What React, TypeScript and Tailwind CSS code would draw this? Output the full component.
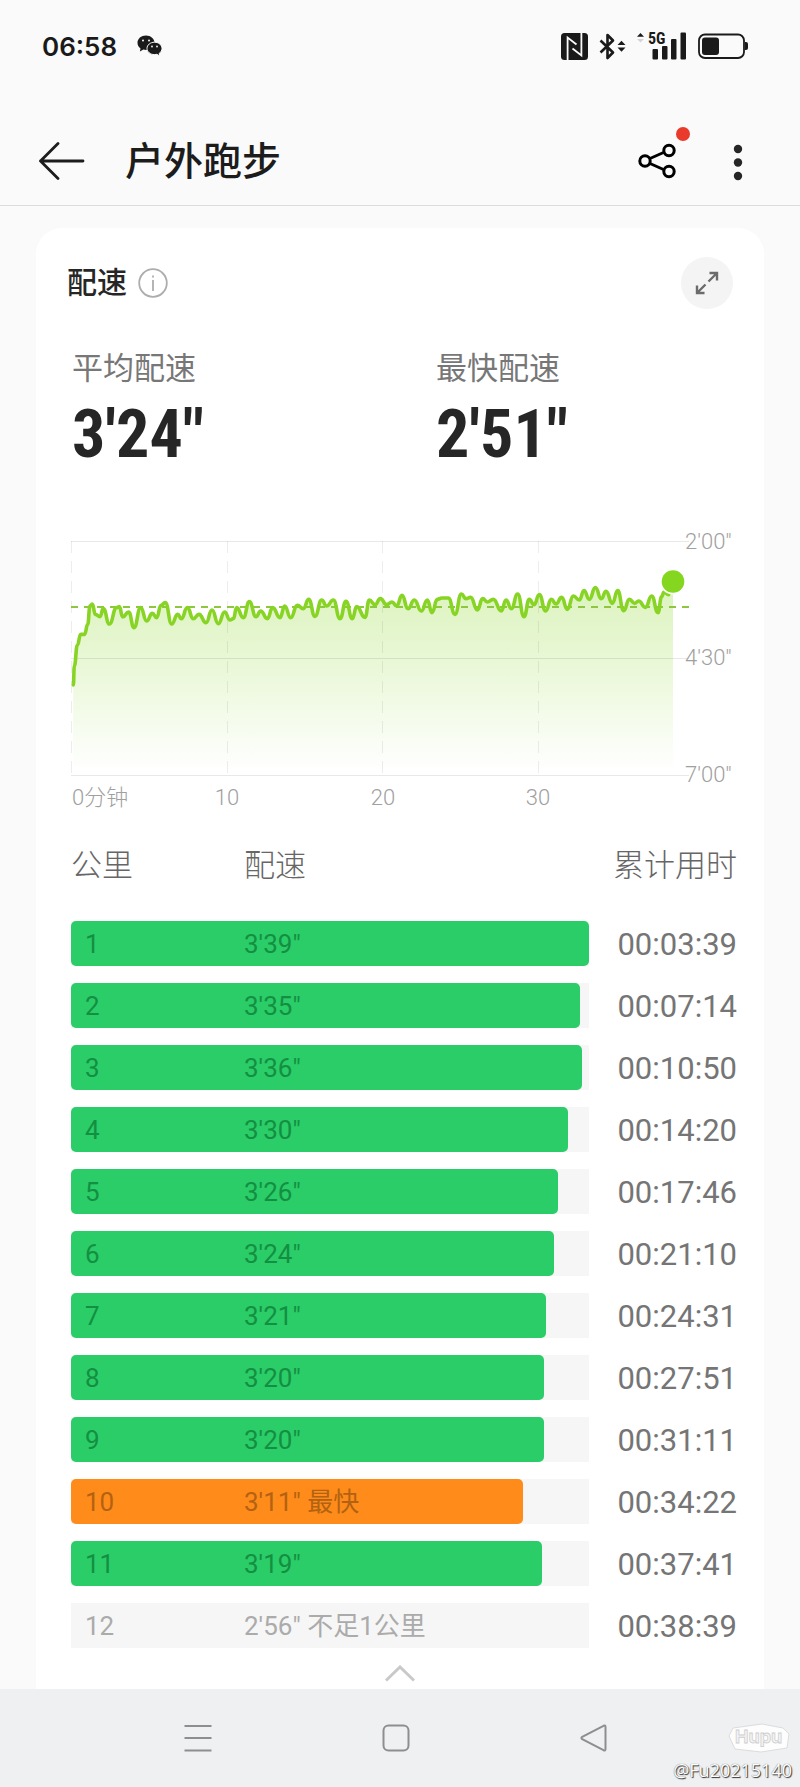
import { useState } from "react";

type Split = { km: number; pace: number; total: string; note?: string; partial?: boolean };

const splits: Split[] = [
  { km: 1, pace: 219, total: "00:03:39" },
  { km: 2, pace: 215, total: "00:07:14" },
  { km: 3, pace: 216, total: "00:10:50" },
  { km: 4, pace: 210, total: "00:14:20" },
  { km: 5, pace: 206, total: "00:17:46" },
  { km: 6, pace: 204, total: "00:21:10" },
  { km: 7, pace: 201, total: "00:24:31" },
  { km: 8, pace: 200, total: "00:27:51" },
  { km: 9, pace: 200, total: "00:31:11" },
  { km: 10, pace: 191, total: "00:34:22", note: "最快" },
  { km: 11, pace: 199, total: "00:37:41" },
  { km: 12, pace: 176, total: "00:38:39", note: "不足1公里", partial: true },
];

const slowest = Math.max(...splits.map((s) => s.pace));

const formatPace = (seconds: number) =>
  `${Math.floor(seconds / 60)}'${String(seconds % 60).padStart(2, "0")}"`;

// pace samples as [x, y], three units to one chart pixel, from the top left of the plot
const samples: [number, number][] = [
  [7, 432], [10, 375], [19, 313], [29, 280], [41, 280], [50, 250], [57, 195], [64, 189], [73, 220], [87, 227],
  [97, 203], [115, 249], [137, 200], [145, 197], [155, 228], [173, 213], [189, 260], [209, 200], [227, 240],
  [244, 217], [257, 230], [270, 193], [283, 185], [302, 249], [320, 220], [331, 233], [349, 200], [367, 233],
  [384, 220], [405, 245], [423, 207], [442, 248], [461, 213], [477, 237], [487, 233], [497, 200], [517, 230],
  [535, 182], [555, 227], [569, 210], [589, 233], [605, 200], [627, 230], [641, 195], [659, 230], [679, 193],
  [697, 203], [713, 175], [732, 226], [752, 177], [767, 195], [787, 177], [807, 233], [825, 181], [844, 233],
  [857, 197], [882, 229], [895, 177], [912, 191], [928, 173], [947, 191], [963, 183], [977, 195], [993, 163],
  [1011, 203], [1030, 177], [1051, 210], [1069, 177], [1083, 215], [1099, 175], [1113, 171], [1132, 171],
  [1152, 220], [1171, 159], [1185, 173], [1199, 169], [1219, 207], [1235, 173], [1249, 183], [1267, 175],
  [1291, 210], [1305, 177], [1321, 203], [1340, 159], [1359, 227], [1375, 175], [1389, 191], [1405, 161],
  [1424, 210], [1441, 175], [1455, 189], [1472, 169], [1489, 205], [1507, 165], [1525, 177], [1539, 149],
  [1555, 175], [1573, 140], [1591, 173], [1605, 151], [1624, 187], [1640, 149], [1658, 209], [1675, 175],
  [1691, 187], [1703, 180], [1723, 199], [1742, 165], [1761, 215], [1772, 167], [1779, 153], [1793, 161],
];

const plotTop = 20;
const points = samples.map(([x, y]) => [x / 3, plotTop + y / 3]);

const tracePath = points.reduce((d, [x, y], i) => {
  if (i === 0) return `M${x} ${y}`;
  const [px, py] = points[i - 1];
  const mid = (px + x) / 2;
  return `${d} C${mid} ${py} ${mid} ${y} ${x} ${y}`;
}, "");

function WeChatIcon() {
  return (
    <svg width="26" height="22" viewBox="0 0 26 22" fill="#1a1a1a" aria-label="微信">
      <path d="M9 0.5C4.2 0.5 0.5 3.7 0.5 7.8c0 2.3 1.1 4.2 3 5.6l-.6 3 3.5-1.8c.9.2 1.7.3 2.6.3 4.8 0 8.5-3.2 8.5-7.1S13.8.5 9 .5Z" />
      <path
        d="M17.5 7.2c-4.2 0-7.5 2.8-7.5 6.2s3.3 6.2 7.5 6.2c.8 0 1.6-.1 2.3-.3l3 1.7-.6-2.6c1.7-1.2 2.8-3 2.8-5 0-3.4-3.3-6.2-7.5-6.2Z"
        stroke="#fafafa"
      />
      <g fill="#fafafa">
        <circle cx="6" cy="5.5" r="1" />
        <circle cx="12" cy="5.5" r="1" />
        <circle cx="15" cy="11.5" r="0.9" />
        <circle cx="20" cy="11.5" r="0.9" />
      </g>
    </svg>
  );
}

function NfcIcon() {
  return (
    <svg width="27" height="27" viewBox="0 0 27 27" fill="none" aria-label="NFC">
      <rect width="27" height="27" rx="3.5" fill="#1a1a1a" />
      <path d="M6.6 27V4.5L15.5 11.5M20.4 0V22.5L11.5 15.5" stroke="#fafafa" strokeWidth="1.8" />
    </svg>
  );
}

function BluetoothIcon() {
  return (
    <svg width="27" height="27" viewBox="0 0 27 27" fill="none" aria-label="蓝牙">
      <path d="M1.5 7.5 14 19.5 8.5 25V2L14 7.5 1.5 19.5" stroke="#1a1a1a" strokeWidth="2.6" strokeLinejoin="round" />
      <path d="M18.5 12 22.5 7.8 26.5 12ZM18.5 14.5 22.5 18.7 26.5 14.5Z" fill="#1a1a1a" />
    </svg>
  );
}

function SignalIcon() {
  return (
    <svg width="50" height="36" viewBox="0 -4 50 36" fill="#1a1a1a" aria-label="5G 信号">
      <path d="M0 4.8 3.5 1 7 4.8Z" />
      <path d="M0 7 3.5 10.5 7 7Z" fill="#d4d4d4" />
      <text x="11" y="12" fontSize="16" fontWeight="700" fontFamily="Roboto Condensed, Roboto, sans-serif">
        5G
      </text>
      <rect x="15.5" y="17" width="5.5" height="10.5" rx="1" />
      <rect x="25" y="14" width="5.5" height="13.5" rx="1" />
      <rect x="34" y="7" width="5.5" height="20.5" rx="1" />
      <rect x="43.5" y="0.5" width="5.5" height="27" rx="1" />
    </svg>
  );
}

function BatteryIcon() {
  return (
    <svg width="50" height="26" viewBox="0 0 50 26" fill="none" aria-label="电量">
      <rect x="1" y="1.5" width="45" height="23.5" rx="6" stroke="#1a1a1a" strokeWidth="1.8" />
      <rect x="4" y="4.5" width="17" height="17.5" rx="3" fill="#1a1a1a" />
      <path d="M47 9h1a2 2 0 0 1 2 2v4a2 2 0 0 1-2 2h-1Z" fill="#1a1a1a" />
    </svg>
  );
}

function StatusBar() {
  return (
    <div className="flex h-[92px] items-center justify-between pr-[52px] pl-[42px]">
      <div className="flex items-center gap-5">
        <time className="font-[Inter,sans-serif] text-[26px] font-semibold text-[#1a1a1a]">06:58</time>
        <WeChatIcon />
      </div>
      <div className="flex items-center gap-[11px]">
        <NfcIcon />
        <BluetoothIcon />
        <SignalIcon />
        <BatteryIcon />
      </div>
    </div>
  );
}

function AppBar() {
  return (
    <header className="flex h-[114px] items-center border-b border-[#dcdcdc] pt-6 pr-[57px] pl-[39px]">
      <button type="button" aria-label="返回">
        <svg width="46" height="38" viewBox="0 0 46 38" fill="none" stroke="#1c1c1c" strokeWidth="2.8" strokeLinecap="round" strokeLinejoin="round">
          <path d="M44 19H1.5M19 1.5 1.5 19 19 36.5" />
        </svg>
      </button>
      <h1 className="ml-10 flex-1 pt-[2px] text-[39px] leading-[48px] font-medium text-[#1c1c1c]">户外跑步</h1>
      <button type="button" aria-label="分享" className="relative">
        <svg width="38" height="36" viewBox="0 0 38 36" fill="none" stroke="#000" strokeWidth="3">
          <path d="M12 15.5 25.5 9.5M12 20.5 25.5 26.5" />
          <circle cx="7" cy="18" r="5.2" />
          <circle cx="31" cy="7.5" r="5.2" />
          <circle cx="31" cy="28.5" r="5.2" />
        </svg>
        <span className="absolute -top-4 -right-[14px] size-[14px] rounded-full bg-[#e93a2b]" />
      </button>
      <button type="button" aria-label="更多" className="ml-[57px] pt-1">
        <svg width="10" height="38" viewBox="0 0 10 38" fill="#262626">
          <circle cx="5" cy="5" r="4.2" />
          <circle cx="5" cy="18.5" r="4.2" />
          <circle cx="5" cy="32" r="4.2" />
        </svg>
      </button>
    </header>
  );
}

function Stat({ label, value }: { label: string; value: string }) {
  return (
    <div>
      <dt className="text-[31px] leading-9 text-[#777]">{label}</dt>
      <dd className="font-['Roboto_Condensed',Roboto,sans-serif] text-[66px] leading-[96px] font-bold text-[#262626]">
        {value}
      </dd>
    </div>
  );
}

function PaceChart() {
  return (
    <svg viewBox="0 0 664 294" className="block w-full" role="img" aria-label="配速曲线">
      <defs>
        <linearGradient id="paceFill" gradientUnits="userSpaceOnUse" x1="0" y1="70" x2="0" y2="250">
          <stop offset="0" stopColor="#86d61f" stopOpacity="0.28" />
          <stop offset="0.4" stopColor="#86d61f" stopOpacity="0.18" />
          <stop offset="1" stopColor="#86d61f" stopOpacity="0" />
        </linearGradient>
      </defs>
      <path d={`${tracePath} L602 60 V254 H2 Z`} fill="url(#paceFill)" />
      <path d="M0 20.5H618M0 137.5H618M0 254.5H618" stroke="#000" strokeOpacity="0.09" />
      <path d="M0.5 20V254M156.5 20V254M311.5 20V254M467.5 20V254" stroke="#000" strokeOpacity="0.07" strokeDasharray="12 8" />
      <path d="M0 86H622" stroke="#8fc63f" strokeWidth="2" strokeDasharray="7 6" />
      <path d={tracePath} fill="none" stroke="#88d424" strokeWidth="3.6" strokeLinecap="round" strokeLinejoin="round" />
      <circle cx="602" cy="60.5" r="13" fill="#fff" />
      <circle cx="602" cy="60.5" r="11.3" fill="#84d61e" />
      <g fill="#a0a0a0" fontSize="22" fontWeight="300">
        <text x="614" y="28">2'00"</text>
        <text x="614" y="144">4'30"</text>
        <text x="614" y="261">7'00"</text>
        <text x="1" y="284">0分钟</text>
        <g textAnchor="middle">
          <text x="156" y="284">10</text>
          <text x="312" y="284">20</text>
          <text x="467" y="284">30</text>
        </g>
      </g>
    </svg>
  );
}

function SplitRow({ split }: { split: Split }) {
  const { km, pace, total, note, partial } = split;
  const best = note === "最快";
  const textColor = partial ? "text-[#ababab]" : best ? "text-[#b36212]" : "text-[#148f42]";
  return (
    <tr className={`grid grid-cols-[173px_1fr_148px] items-center text-[26px] leading-[43px] ${textColor}`}>
      <td className="col-span-2 col-start-1 row-start-1 grid h-[45px] bg-[#f6f6f6]">
        {!partial && (
          <div
            className={`col-start-1 row-start-1 rounded-[5px] ${best ? "bg-[#ff8c1a]" : "bg-[#2acd68]"}`}
            style={{ width: `${(pace / slowest) * 100}%` }}
          />
        )}
        <span className="col-start-1 row-start-1 pt-[2px] pl-[14px]">{km}</span>
      </td>
      <td className="col-start-2 row-start-1 pt-[2px]">
        {formatPace(pace)}
        {note && ` ${note}`}
      </td>
      <td className="col-start-3 row-start-1 pt-[2px] text-right text-[31px] text-[#757575]">{total}</td>
    </tr>
  );
}

function PaceCard() {
  const [open, setOpen] = useState(true);
  return (
    <section className="mx-[36px] mt-[22px] flex-1 rounded-t-[26px] bg-white px-[27px] pt-[29px]">
      <div className="flex items-center px-1">
        <h2 className="text-[30px] leading-9 font-medium text-[#262626]">配速</h2>
        <button type="button" aria-label="说明" className="ml-[11px]">
          <svg width="30" height="30" viewBox="0 0 30 30" fill="none" stroke="#adadad" strokeWidth="1.8">
            <circle cx="15" cy="15" r="13.8" />
            <path d="M15 12v11M15 7.5v2" />
          </svg>
        </button>
        <button type="button" aria-label="全屏" className="ml-auto flex size-[52px] items-center justify-center rounded-full bg-[#f4f4f4]">
          <svg width="24" height="24" viewBox="0 0 24 24" fill="none" stroke="#6b6b6b" strokeWidth="2.4">
            <path d="M13.5 10.5 22 2M14.5 2H22V9.5M10.5 13.5 2 22M9.5 22H2V14.5" />
          </svg>
        </button>
      </div>

      <dl className="mt-[42px] grid grid-cols-[364px_1fr] pl-[9px]">
        <Stat label="平均配速" value={`3'24"`} />
        <Stat label="最快配速" value={`2'51"`} />
      </dl>

      <div className="mt-[38px] pr-[2px] pl-2">
        <PaceChart />
      </div>

      <table className="mt-[33px] block pl-2">
        <thead className="block">
          <tr className="grid grid-cols-[173px_1fr_148px] text-left text-[31px] leading-9 text-[#666]">
            <th className="font-light">公里</th>
            <th className="font-light">配速</th>
            <th className="text-right font-light">累计用时</th>
          </tr>
        </thead>
        {open && (
          <tbody className="flex flex-col gap-[17px] pt-[37px]">
            {splits.map((split) => (
              <SplitRow key={split.km} split={split} />
            ))}
          </tbody>
        )}
      </table>

      <button
        type="button"
        aria-label="收起"
        aria-expanded={open}
        onClick={() => setOpen(!open)}
        className="mx-auto flex h-[39px] items-center pt-3"
      >
        <svg width="30" height="17" viewBox="0 0 30 17" fill="none" stroke="#c9c9c9" strokeWidth="3">
          <path d="M1 15.5 15 2 29 15.5" />
        </svg>
      </button>
    </section>
  );
}

function SystemNav() {
  return (
    <nav className="relative flex h-[98px] shrink-0 items-center justify-between bg-[#eff0f2] pr-[24%] pl-[23%]">
      <button type="button" aria-label="最近任务">
        <svg width="28" height="28" viewBox="0 0 28 28" stroke="#8e8e90" strokeWidth="2">
          <path d="M0.5 2H27.5M0.5 14H27.5M0.5 26.5H27.5" />
        </svg>
      </button>
      <button type="button" aria-label="主页">
        <svg width="28" height="28" viewBox="0 0 28 28" fill="none" stroke="#8e8e90" strokeWidth="2">
          <rect x="1.5" y="1.5" width="25" height="25" rx="5" />
        </svg>
      </button>
      <button type="button" aria-label="后退">
        <svg width="28" height="28" viewBox="0 0 28 28" fill="none" stroke="#8e8e90" strokeWidth="2" strokeLinejoin="round">
          <path d="M2.2 12.8 23.5 1.8Q25.5 1 25.5 3V25Q25.5 27 23.5 26.2L2.2 15.2Q0.6 14 2.2 12.8Z" />
        </svg>
      </button>

      <div className="absolute right-2 bottom-1 flex flex-col items-end gap-1">
        <svg width="64" height="30" viewBox="0 0 64 30" className="mr-px" aria-label="虎扑">
          <path d="M6 5 35 1 56 5 62 11 60 25 34 29 8 26 2 13Z" fill="#fdfdfd" stroke="#dcdcdc" strokeLinejoin="round" />
          <text
            x="8"
            y="20"
            fontSize="18"
            fontWeight="700"
            fontFamily="Inter, sans-serif"
            fill="#f4f4f4"
            stroke="#cfcfcf"
            strokeWidth="0.8"
          >
            Hupu
          </text>
        </svg>
        <span className="font-['Open_Sans',sans-serif] text-[18px] leading-[26px] text-white [text-shadow:1px_1px_1px_#333,0_0_1px_#555]">
          @Fu20215140
        </span>
      </div>
    </nav>
  );
}

export default function App() {
  return (
    <div className="flex min-h-screen flex-col bg-[#fafafa] font-[Roboto,'Noto_Sans_CJK_SC',sans-serif]">
      <StatusBar />
      <AppBar />
      <main className="flex flex-1 flex-col">
        <PaceCard />
      </main>
      <SystemNav />
    </div>
  );
}
